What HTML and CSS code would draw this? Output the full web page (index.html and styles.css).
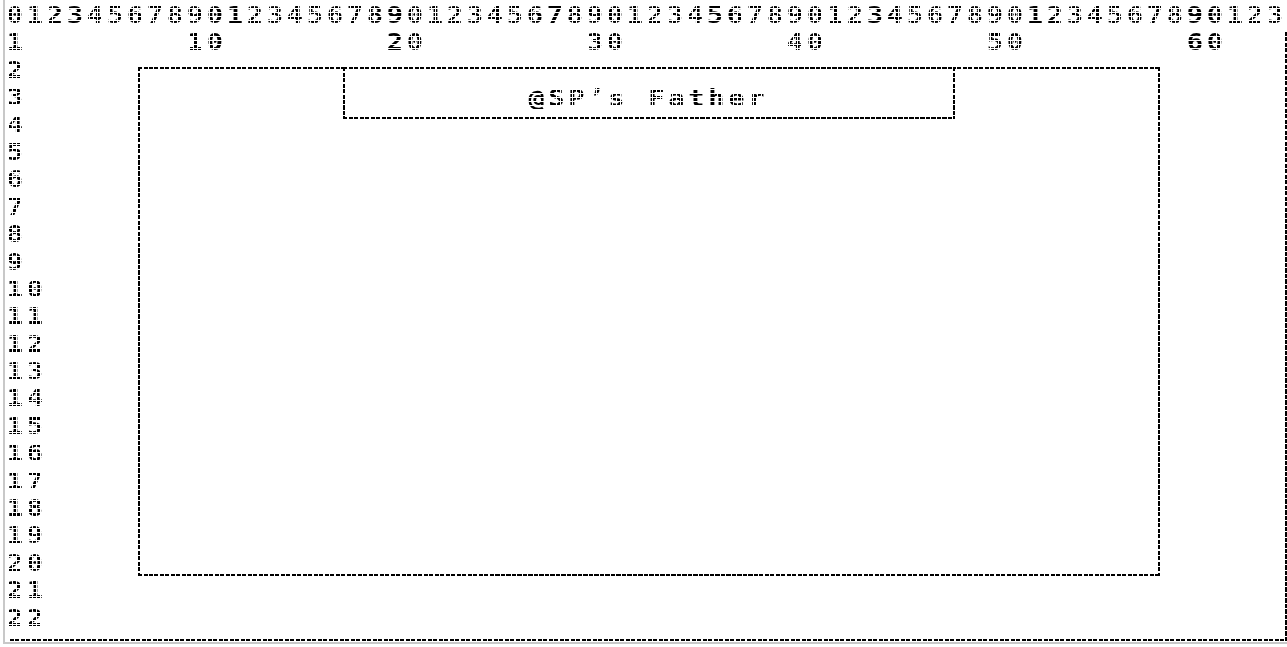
FILE: index.html
```html
<!DOCTYPE html>
<html lang="en">
<head>
<meta charset="utf-8">
<title>@SP's Father</title>
<link rel="stylesheet" href="styles.css">
</head>
<body>
<div class="window">
  <div class="grid">
    <div class="row">0123456789012345678901234567890123456789012345678901234567890123</div>
    <div class="row">1        10        20        30        40        50        60</div>
    <div class="row">2</div>
    <div class="row">3</div>
    <div class="row">4</div>
    <div class="row">5</div>
    <div class="row">6</div>
    <div class="row">7</div>
    <div class="row">8</div>
    <div class="row">9</div>
    <div class="row">10</div>
    <div class="row">11</div>
    <div class="row">12</div>
    <div class="row">13</div>
    <div class="row">14</div>
    <div class="row">15</div>
    <div class="row">16</div>
    <div class="row">17</div>
    <div class="row">18</div>
    <div class="row">19</div>
    <div class="row">20</div>
    <div class="row">21</div>
    <div class="row">22</div>
  </div>
  <div class="frame"></div>
  <div class="dash-box main-box"></div>
  <div class="dash-box title-box"><span class="title">@SP’s Father</span></div>
</div>
</body>
</html>
```

FILE: styles.css
```css
html, body {
  margin: 0;
  padding: 0;
  background: #ffffff;
}

.window {
  position: relative;
  box-sizing: border-box;
  width: 1284px;
  height: 644px;
  margin-left: 3px;
  border-left: 2px solid #c8c8c8;
  border-bottom: 2px solid #c8c8c8;
  background: #ffffff;
  overflow: hidden;
}

.grid,
.title {
  font-family: "DejaVu Sans Mono", "Liberation Mono", monospace;
  font-size: 23.5px;
  letter-spacing: 3.24px;
  color: #000;
  font-weight: bold;
  transform: scaleX(1.15);
  -webkit-mask-image:
    repeating-linear-gradient(0deg, #000 0 3.2px, transparent 3.2px 4px),
    repeating-linear-gradient(90deg, #000 0 2.8px, transparent 2.8px 3.5px);
  -webkit-mask-composite: source-in;
  mask-image:
    repeating-linear-gradient(0deg, #000 0 3.2px, transparent 3.2px 4px),
    repeating-linear-gradient(90deg, #000 0 2.8px, transparent 2.8px 3.5px);
  mask-composite: intersect;
}

.grid {
  padding: 2px 0 0 1.63px;
  transform-origin: 0 0;
}

.row {
  height: 27.4px;
  line-height: 27.4px;
  white-space: pre;
}

.frame {
  position: absolute;
  top: 32px;
  left: 5px;
  right: 0;
  bottom: 1px;
  background:
    repeating-linear-gradient(90deg, #000 0 4px, transparent 4px 5.5px) left bottom / 100% 2px no-repeat,
    repeating-linear-gradient(180deg, #000 0 4px, transparent 4px 5.5px) right top / 2px 100% no-repeat;
}

.dash-box {
  position: absolute;
  box-sizing: border-box;
  background:
    repeating-linear-gradient(90deg, #000 0 4px, transparent 4px 5.5px) left top / 100% 2px no-repeat,
    repeating-linear-gradient(90deg, #000 0 4px, transparent 4px 5.5px) left bottom / 100% 2px no-repeat,
    repeating-linear-gradient(180deg, #000 0 4px, transparent 4px 5.5px) left top / 2px 100% no-repeat,
    repeating-linear-gradient(180deg, #000 0 4px, transparent 4px 5.5px) right top / 2px 100% no-repeat,
    #fff;
}

.main-box {
  left: 133px;
  top: 67px;
  width: 1022px;
  height: 509px;
}

.title-box {
  left: 338px;
  top: 67px;
  width: 612px;
  height: 52px;
  display: flex;
  align-items: center;
  justify-content: center;
  padding: 12px 2px 0 0;
}

.title {
  display: block;
  line-height: 27.4px;
  white-space: pre;
  transform-origin: 50% 50%;
}
```
